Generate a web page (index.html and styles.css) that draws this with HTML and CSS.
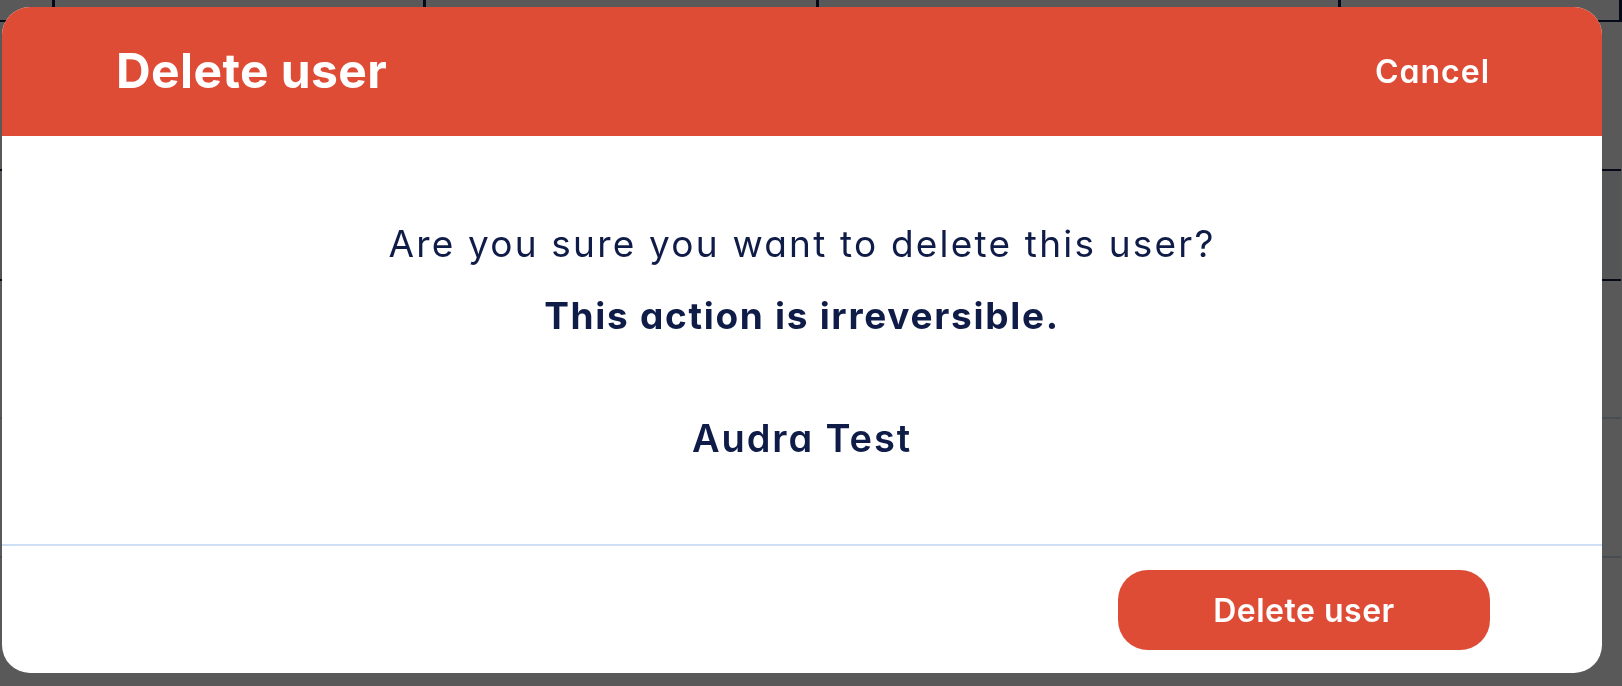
FILE: index.html
```html
<!DOCTYPE html>
<html lang="en">
<head>
    <meta charset="UTF-8">
    <meta name="viewport" content="width=device-width, initial-scale=1.0">
    <title>Users - Delete user</title>
    <link rel="stylesheet" href="styles.css">
</head>
<body>

    <!-- Page behind the dialog -->
    <div class="app">
        <table class="users">
            <thead>
                <tr>
                    <th class="col-check"></th>
                    <th class="col-name"></th>
                    <th class="col-email"></th>
                    <th class="col-role"></th>
                    <th class="col-actions"></th>
                </tr>
            </thead>
            <tbody>
                <tr class="row-a"><td colspan="5"></td></tr>
                <tr class="row-b"><td colspan="5"></td></tr>
                <tr class="row-c"><td colspan="5"></td></tr>
                <tr class="row-d"><td colspan="5"></td></tr>
            </tbody>
        </table>
    </div>

    <!-- Dialog -->
    <div class="overlay">
        <div class="modal">
            <div class="modal-header">
                <h2>Delete user</h2>
                <button class="link-btn">Cancel</button>
            </div>
            <div class="modal-body">
                <p>Are you sure you want to delete this user?</p>
                <p class="warning">This action is irreversible.</p>
                <p class="user-name">Audra Test</p>
            </div>
            <div class="modal-footer">
                <button class="danger-btn">Delete user</button>
            </div>
        </div>
    </div>

</body>
</html>
```

FILE: styles.css
```css
body {
    margin: 0;
    font-family: 'Inter', 'Noto Sans', sans-serif;
    font-feature-settings: "cv11";
    background-color: #ffffff;
    color: #0f1c47;
}

/* table behind the overlay */
.users {
    border-collapse: collapse;
    table-layout: fixed;
    width: 1622px;
}

.users th {
    height: 20px;
    padding: 0;
    border-right: 3px solid #0f1c47;
    border-bottom: 2px solid #0f1c47;
}

.col-check { width: 52px; }
.col-name { width: 368px; }
.col-email { width: 390px; }
.col-role { width: 519px; }

.users td {
    padding: 0;
}

.row-a td { height: 147px; border-bottom: 2px solid #0f1c47; }
.row-b td { height: 108px; border-bottom: 2px solid #0f1c47; background-color: #f1f2f5; }
.row-c td { height: 136px; border-bottom: 2px solid #cddcf0; }
.row-d td { height: 137px; border-bottom: 2px solid #cddcf0; }

/* dialog */
.overlay {
    position: fixed;
    inset: 0;
    background-color: rgba(0, 0, 0, 0.65);
    display: flex;
    align-items: flex-start;
    padding: 7px 0 0 2px;
}

.modal {
    width: 1600px;
    background: white;
    border-radius: 28px;
    overflow: hidden;
}

.modal-header {
    height: 129px;
    background-color: #de4c36;
    display: flex;
    align-items: center;
    justify-content: space-between;
    padding: 0 112px 0 114px;
}

.modal-header h2 {
    margin: 0;
    color: white;
    font-size: 48px;
    font-weight: 700;
    line-height: 58px;
    margin-top: -2px;
    letter-spacing: 0.4px;
}

.link-btn {
    background: none;
    border: none;
    padding: 0;
    color: white;
    font-family: inherit;
    font-feature-settings: "cv11";
    font-size: 32px;
    font-weight: 600;
    letter-spacing: 1px;
    cursor: pointer;
}

.modal-body {
    padding: 72px 0 70px;
    text-align: center;
}

.modal-body p {
    margin: 0;
    font-size: 37px;
    line-height: 72px;
    letter-spacing: 2.2px;
}

.modal-body .warning {
    font-weight: 700;
    letter-spacing: 1.7px;
}

.modal-body .user-name {
    margin-top: 50px;
    font-size: 38px;
    font-weight: 600;
    letter-spacing: 1.9px;
}

.modal-footer {
    border-top: 2px solid #cfdff3;
    display: flex;
    justify-content: flex-end;
    padding: 24px 112px 23px 0;
}

.danger-btn {
    width: 372px;
    height: 80px;
    background-color: #de4c36;
    color: white;
    border: none;
    border-radius: 30px;
    font-family: inherit;
    font-feature-settings: "cv11";
    font-size: 32px;
    font-weight: 600;
    letter-spacing: 0.5px;
    cursor: pointer;
}
```
